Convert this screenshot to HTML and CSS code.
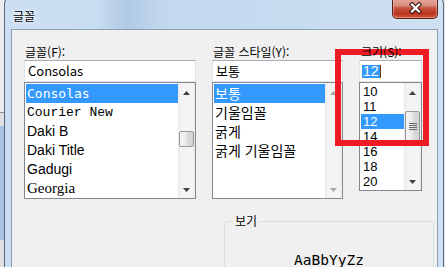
FILE: index.html
```html
<!DOCTYPE html>
<html lang="ko">
<head>
    <meta charset="UTF-8">
    <title>글꼴</title>
    <link rel="stylesheet" href="styles.css">
</head>
<body>
<div class="screen">
    <div class="behind"></div>
    <div class="window">
        <div class="titlebar">
            <span class="title">글꼴</span>
            <span class="close">
                <svg width="13" height="12" viewBox="0 0 13 12">
                    <path d="M3 2.5 L10 9.5 M10 2.5 L3 9.5" stroke="#3d1812" stroke-width="4.4" stroke-linecap="square"/>
                    <path d="M3 2.5 L10 9.5 M10 2.5 L3 9.5" stroke="#fff" stroke-width="2.2" stroke-linecap="square"/>
                </svg>
            </span>
        </div>

        <div class="client">
            <div class="pickers">
                <!-- font face -->
                <div class="col col-font">
                    <label class="cap">글꼴(F):</label>
                    <div class="edit">Consolas</div>
                    <div class="list list-font">
                        <ul class="items">
                            <li class="sel f-consolas">Consolas</li>
                            <li class="f-courier">Courier New</li>
                            <li class="f-sans">Daki B</li>
                            <li class="f-sans">Daki Title</li>
                            <li class="f-sans">Gadugi</li>
                            <li class="f-serif">Georgia</li>
                        </ul>
                        <div class="sbar">
                            <span class="arrow up"><svg width="7" height="4" viewBox="0 0 7 4"><path d="M3.5 0 L7 4 H0Z"/></svg></span>
                            <span class="track"><span class="thumb thumb-font"></span></span>
                            <span class="arrow down"><svg width="7" height="4" viewBox="0 0 7 4"><path d="M0 0 H7 L3.5 4Z"/></svg></span>
                        </div>
                    </div>
                </div>

                <!-- font style -->
                <div class="col col-style">
                    <label class="cap">글꼴 스타일(Y):</label>
                    <div class="edit">보통</div>
                    <div class="list list-style">
                        <ul class="items">
                            <li class="sel">보통</li>
                            <li>기울임꼴</li>
                            <li>굵게</li>
                            <li>굵게 기울임꼴</li>
                        </ul>
                        <div class="sbar off">
                            <span class="arrow up"><svg width="7" height="4" viewBox="0 0 7 4"><path d="M3.5 0 L7 4 H0Z"/></svg></span>
                            <span class="track"></span>
                            <span class="arrow down"><svg width="7" height="4" viewBox="0 0 7 4"><path d="M0 0 H7 L3.5 4Z"/></svg></span>
                        </div>
                    </div>
                </div>

                <!-- size -->
                <div class="col col-size">
                    <label class="cap cap-size">크기(S):</label>
                    <div class="edit edit-size"><span class="picked">12</span><span class="caret"></span></div>
                    <div class="list list-size">
                        <ul class="items">
                            <li>10</li>
                            <li>11</li>
                            <li class="sel">12</li>
                            <li>14</li>
                            <li>16</li>
                            <li>18</li>
                            <li>20</li>
                        </ul>
                        <div class="sbar">
                            <span class="arrow up"><svg width="7" height="4" viewBox="0 0 7 4"><path d="M3.5 0 L7 4 H0Z"/></svg></span>
                            <span class="track">
                                <span class="thumb thumb-size">
                                    <svg width="8" height="7" viewBox="0 0 8 7">
                                        <path d="M0 0.5 H8 M0 2.5 H8 M0 4.5 H8 M0 6.5 H8" stroke="#6b6b6b" stroke-width="1"/>
                                    </svg>
                                </span>
                            </span>
                            <span class="arrow down"><svg width="7" height="4" viewBox="0 0 7 4"><path d="M0 0 H7 L3.5 4Z"/></svg></span>
                        </div>
                    </div>
                </div>
            </div>

            <div class="lower">
                <fieldset class="preview">
                    <legend>보기</legend>
                    <div class="sample">AaBbYyZz</div>
                </fieldset>
            </div>
        </div>
    </div>
</div>
<!-- red highlight drawn over the screenshot -->
<div class="mark"></div>
</body>
</html>
```

FILE: styles.css
```css
body {
    margin: 0;
    background-color: #e4e4e4;
    font-family: "Noto Sans CJK KR", sans-serif;
    color: #000;
    overflow: hidden;
}
.screen {
    display: flex;
    width: 445px;
    height: 267px;
    overflow: hidden;
}
.behind {
    width: 4px;
    flex: none;
    background: linear-gradient(#ececec 0, #ececec 112px, #8d8d8d 112px, #8d8d8d 113px, #e0e0e0 113px, #e0e0e0 126px, #a9c5e3 126px, #a9c5e3 240px, #e0e0e0 240px);
}
.window {
    flex: none;
    width: 440px;
    height: 280px;
    margin-top: -4px;
    box-sizing: border-box;
    border: 1px solid #52667e;
    border-bottom: none;
    border-radius: 8px 8px 0 0;
    padding: 0 5px 0 6px;
    display: flex;
    flex-direction: column;
    background: linear-gradient(90deg, #cbdef2 0, #cadef2 90px, #b0c9e4 122px, #c3d8ee 160px, #c8dcf0 300px, #cfe1f3 100%);
}
.titlebar {
    flex: none;
    height: 32px;
    display: flex;
    justify-content: space-between;
    align-items: flex-start;
}
.title {
    margin: 11px 0 0 2px;
    font-size: 12px;
    line-height: 16px;
    text-shadow: 0 0 5px #fff, 0 0 3px #fff;
}
.close {
    width: 46px;
    height: 22px;
    box-sizing: border-box;
    border: 1px solid #5a2219;
    border-top: none;
    border-radius: 0 0 5px 5px;
    display: flex;
    align-items: center;
    justify-content: center;
    background: linear-gradient(#e7aca1 0%, #d98f82 40%, #c75640 52%, #b9341f 78%, #cf5a39 100%);
    box-shadow: inset 0 0 0 1px rgba(255, 200, 190, 0.45);
}
.close svg {
    margin-top: 1px;
}
.client {
    flex: 1;
    border: 1px solid #8d9fb3;
    background-color: #f0f0f0;
    padding: 14px 0 0 12px;
}
.pickers {
    display: flex;
    gap: 16px;
}
.col-font { width: 172px; }
.col-style { width: 131px; }
.col-size { width: 63px; }
.cap {
    display: block;
    height: 16px;
    font-size: 12px;
    line-height: 16px;
    padding-left: 1px;
}
.cap-size {
    position: relative;
    z-index: 2;
    padding-left: 2px;
}
.edit {
    height: 22px;
    box-sizing: border-box;
    border: 1px solid;
    border-color: #abadb3 #dbdfe6 #e3e9ef #e2e3ea;
    background-color: #fff;
    padding: 0 3px;
    font-size: 13px;
    line-height: 20px;
    white-space: nowrap;
}
.edit-size {
    display: flex;
    align-items: center;
    padding: 0 2px;
}
.picked {
    background-color: #3399ff;
    color: #fff;
    height: 13px;
    line-height: 13px;
    padding: 0 1px;
    font-family: "Liberation Sans", sans-serif;
    font-size: 14px;
}
.caret {
    width: 1px;
    height: 13px;
    background-color: #6a3a10;
}
.list {
    display: flex;
    box-sizing: border-box;
    border: 1px solid #828790;
    background-color: #fff;
}
.list-font, .list-style { height: 117px; }
.list-size { height: 109px; }
.items {
    flex: 1;
    list-style: none;
    margin: 0;
    padding: 1px 0 0 1px;
    overflow: hidden;
}
.items li {
    height: 19px;
    line-height: 19px;
    padding-left: 1px;
    font-size: 14px;
    white-space: nowrap;
}
.list-size .items li {
    height: 15px;
    line-height: 15px;
    padding-left: 2px;
    font-family: "Liberation Sans", sans-serif;
    font-size: 13px;
}
.items li.sel {
    background-color: #3399ff;
    color: #fff;
}
.f-consolas {
    font-family: "DejaVu Sans Mono", monospace;
    font-size: 13px !important;
}
.f-courier {
    font-family: "Liberation Mono", monospace;
    font-size: 13px !important;
}
.f-sans {
    font-family: "Liberation Sans", sans-serif;
}
.f-serif {
    font-family: "Liberation Serif", serif;
    font-size: 15px !important;
}
.sbar {
    width: 17px;
    flex: none;
    display: flex;
    flex-direction: column;
    background: linear-gradient(90deg, #e6e6e6 0, #f3f3f3 2px, #f5f5f5 14px, #ebebeb 100%);
}
.arrow {
    height: 17px;
    flex: none;
    display: flex;
    align-items: center;
    justify-content: center;
}
.arrow.up { padding-top: 2px; box-sizing: border-box; }
.arrow svg { fill: #3f3f3f; }
.sbar.off .arrow svg { fill: #a7a7a7; }
.track {
    flex: 1;
}
.thumb {
    display: flex;
    align-items: center;
    justify-content: center;
    box-sizing: border-box;
    margin: 0 1px;
    border: 1px solid #979797;
    border-radius: 2px;
    background: linear-gradient(90deg, #f4f4f4 0, #ececec 45%, #dcdcdc 55%, #d2d2d2 100%);
}
.thumb-font {
    margin-top: 31px;
    height: 16px;
}
.thumb-size {
    margin-top: 11px;
    height: 30px;
}
.lower {
    padding-left: 200px;
    margin-top: 14px;
}
.preview {
    width: 210px;
    height: 80px;
    box-sizing: border-box;
    margin: 0;
    padding: 0;
    border: 1px solid #d5dfe5;
    border-radius: 3px;
}
.preview legend {
    margin-left: 8px;
    padding: 0 2px;
    font-size: 12px;
    line-height: 16px;
}
.sample {
    padding-top: 21px;
    text-align: center;
    font-family: "DejaVu Sans Mono", monospace;
    font-size: 14.5px;
    line-height: 20px;
}
.mark {
    position: absolute;
    left: 335px;
    top: 49px;
    width: 94px;
    height: 97px;
    box-sizing: border-box;
    border: 6px solid #ed1c24;
    z-index: 1;
    pointer-events: none;
}
```
